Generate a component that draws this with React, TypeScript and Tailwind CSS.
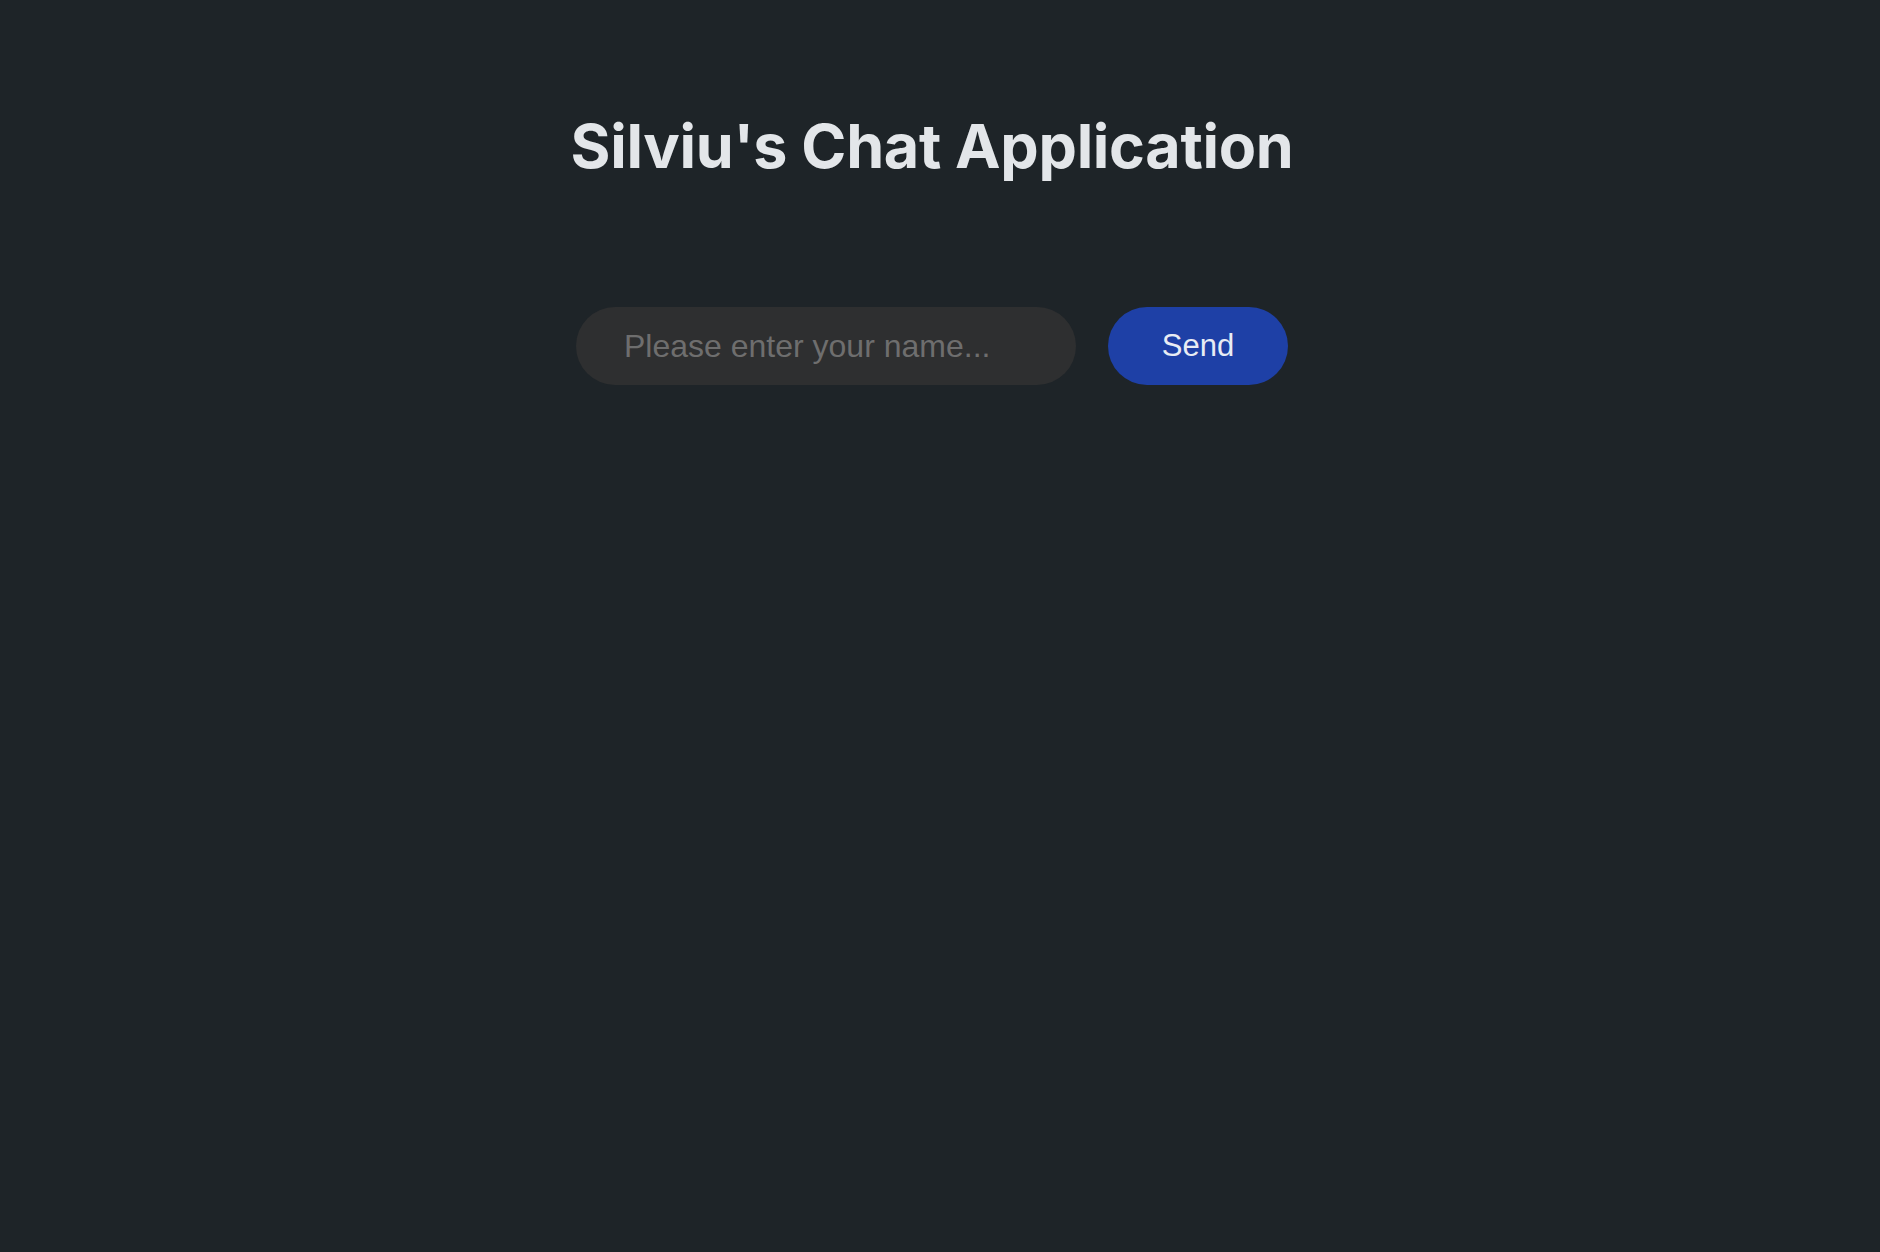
import React from "react";

export default function App() {
  return (
    <div className="min-h-[1252px] w-full bg-[#1e2428] pr-4 flex flex-col items-center font-[Inter,'Liberation_Sans',sans-serif]">
      <h1 className="mt-[103px] text-[61px] leading-[86px] font-bold text-[#e3e6e9] tracking-[-0.005em]">
        Silviu's Chat Application
      </h1>
      <div className="mt-[118px] flex items-center gap-8 font-['Liberation_Sans',Arial,sans-serif]">
        <input
          type="text"
          placeholder="Please enter your name..."
          className="w-[500px] h-[78px] rounded-full bg-[#2e2f30] pl-12 pr-6 text-[32px] text-gray-200 placeholder:text-[#6e6e6e] outline-none"
        />
        <button className="w-[180px] h-[78px] rounded-full bg-[#1e40a6] text-[31px] text-[#e8ecf4]">
          Send
        </button>
      </div>
    </div>
  );
}
